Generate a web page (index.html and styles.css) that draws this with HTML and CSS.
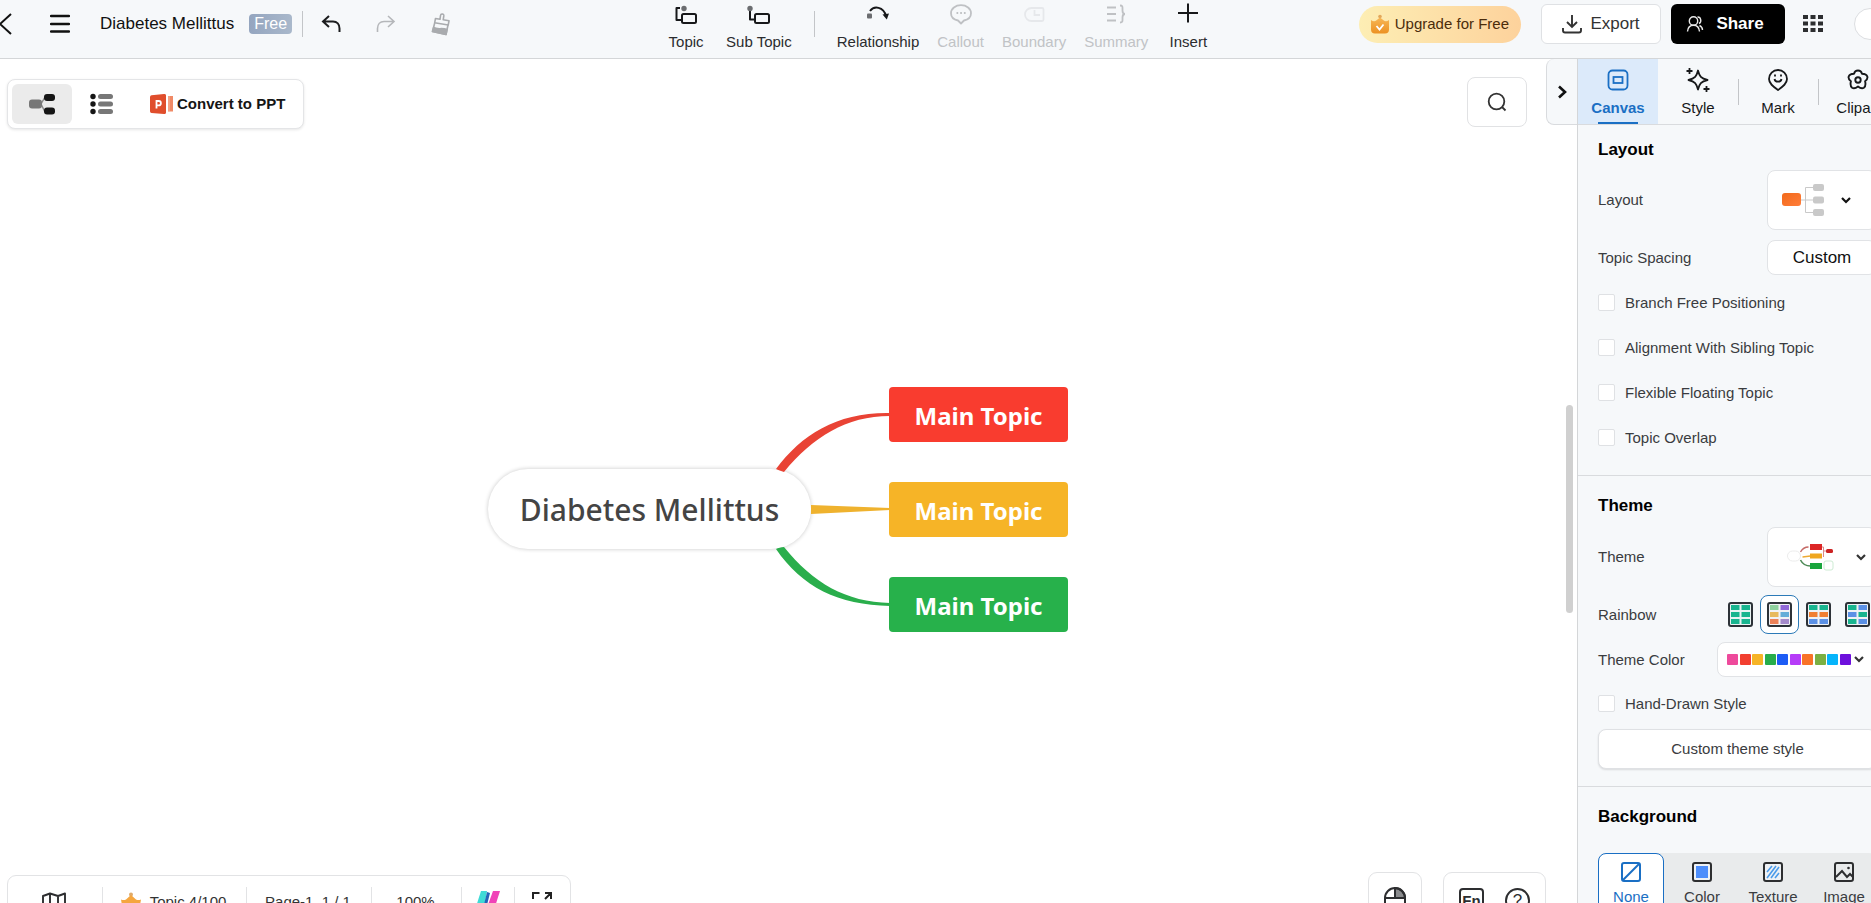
FILE: index.html
```html
<!DOCTYPE html>
<html lang="en">
<head>
    <meta charset="UTF-8">
    <meta name="viewport" content="width=device-width, initial-scale=1.0">
    <title>Diabetes Mellittus</title>
    <link rel="stylesheet" href="styles.css">
</head>
<body>
<div class="app">
    <header class="topbar">
        <div class="file-group">
            <button class="icon-btn back" aria-label="Back">
                <svg width="12" height="22" viewBox="0 0 12 22" fill="none" stroke="#111" stroke-width="2"><path d="M11 1L0 11l11 10"/></svg>
            </button>
            <button class="icon-btn menu" aria-label="Menu">
                <svg width="20" height="20" viewBox="0 0 20 20" stroke="#111" stroke-width="2.4" stroke-linecap="round"><path d="M1 2h18M1 10h18M1 17.500h18"/></svg>
            </button>
            <h1 class="file-name">Diabetes Mellittus</h1>
            <span class="plan-badge">Free</span>
            <span class="divider"></span>
            <button class="icon-btn undo" aria-label="Undo">
                <svg width="20" height="20" viewBox="0 0 20 20" fill="none" stroke="#1b1c1e" stroke-width="2"><path d="M8 2L2 7.500 8 13M2.500 7.500H12c4 0 6.500 3 6.500 7v3.500"/></svg>
            </button>
            <button class="icon-btn redo" aria-label="Redo" disabled>
                <svg width="20" height="20" viewBox="0 0 20 20" fill="none" stroke="#b5b7ba" stroke-width="1.600"><path d="M12 2l6 5.500-6 5.500M17.500 7.500H8c-4 0-6.500 3-6.500 7v3.500"/></svg>
            </button>
            <button class="icon-btn" aria-label="Format painter" disabled>
                <svg width="20" height="24" viewBox="0 0 20 24" fill="none" stroke="#a9abae" stroke-width="1.600" stroke-linejoin="round"><path d="M4.500 6.500l4.500.8.500-3.800c.3-2.300 3.600-1.900 3.300.4l-.6 3.900 5.800 1-.8 4.200-13.500-2.300z"/><path d="M3.700 11L1.500 19.500 15 22.500l2-9.500"/><path d="M2.600 15.500c4 2.500 8 0 13.400 2l-1 5-13.500-3z" fill="#a9abae"/></svg>
            </button>
        </div>

        <nav class="tools" aria-label="Insert tools">
            <button class="tool">
                <svg width="24" height="24" viewBox="0 0 24 24" fill="none" stroke="#17181a" stroke-width="2" stroke-linejoin="round"><path d="M6 6H2.500v12H8"/><rect x="8" y="12" width="14" height="9" rx="1.500"/><circle cx="10" cy="6.500" r="2.700" fill="#6b6d70" stroke="none"/></svg>
                <span>Topic</span>
            </button>
            <button class="tool">
                <svg width="24" height="24" viewBox="0 0 24 24" fill="none" stroke="#17181a" stroke-width="2" stroke-linejoin="round"><path d="M3 9v8.500h5"/><rect x="8" y="12" width="14" height="9" rx="1.500"/><circle cx="3" cy="6.500" r="2.700" fill="#6b6d70" stroke="none"/></svg>
                <span>Sub Topic</span>
            </button>
            <span class="divider"></span>
            <button class="tool">
                <svg width="24" height="24" viewBox="0 0 24 24" fill="none" stroke="#17181a" stroke-width="2"><path d="M4 9c4-5.500 13.500-4.500 16 5"/><path d="M16.500 12.500l6.500-1-2.200 6z" fill="#17181a" stroke="none"/><rect x="1" y="11.500" width="5" height="5" rx="1" fill="#6b6d70" stroke="none"/></svg>
                <span>Relationship</span>
            </button>
            <button class="tool" disabled>
                <svg width="24" height="24" viewBox="0 0 24 24" fill="none" stroke="#bfc1c4" stroke-width="1.800"><path d="M12 21.500l-3-3C4.500 17.500 2 15 2 11.200 2 6.500 6.500 3.200 12 3.200s10 3.300 10 8c0 3.800-2.500 6.300-7 7.300z" stroke-linejoin="round"/><path d="M7.500 11h1.700M11.200 11h1.700M14.900 11h1.700"/></svg>
                <span>Callout</span>
            </button>
            <button class="tool" disabled>
                <svg width="24" height="24" viewBox="0 0 24 24" fill="none" stroke="#e6e8eb" stroke-width="1.800"><path d="M9.500 6H20a1.500 1.500 0 0 1 1.500 1.500v10A1.500 1.500 0 0 1 20 19H9.500a6.500 6.500 0 0 1 0-13z"/><path d="M12.500 8v5H18"/></svg>
                <span>Boundary</span>
            </button>
            <button class="tool" disabled>
                <svg width="24" height="24" viewBox="0 0 24 24" fill="none" stroke="#bfc1c4" stroke-width="1.800"><path d="M3 5.500h9M3 12h9M3 18.500h9M16 3.500c3 0 2.500 1.500 2.500 5 0 2 .5 3.500 2.500 3.500-2 0-2.500 1.500-2.500 3.500 0 3.500.5 5-2.500 5"/></svg>
                <span>Summary</span>
            </button>
            <button class="tool">
                <svg width="24" height="24" viewBox="0 0 24 24" stroke="#17181a" stroke-width="2"><path d="M12 1.500v19M2 11h20"/></svg>
                <span>Insert</span>
            </button>
        </nav>

        <div class="account-group">
            <button class="upgrade">
                <svg width="18" height="20" viewBox="0 0 18 20"><defs><linearGradient id="crown" x1="0" y1="0" x2="0" y2="1"><stop offset="0" stop-color="#f7b757"/><stop offset="1" stop-color="#ec9122"/></linearGradient></defs><circle cx="9" cy="2.500" r="1.800" fill="#e3a85b"/><path d="M0 6c2 1.500 4 1.500 5.500.3L9 3.500l3.500 2.800C14 7.500 16 7.500 18 6v9.500a4 4 0 0 1-4 4H4a4 4 0 0 1-4-4z" fill="url(#crown)"/><path d="M5.500 12l3 3.500 4-5" fill="none" stroke="#fff" stroke-width="1.800"/></svg>
                Upgrade for Free
            </button>
            <button class="export">
                <svg width="20" height="20" viewBox="0 0 20 20" fill="none" stroke="#333" stroke-width="1.900"><path d="M10 1v11.500M5 8l5 5 5-5M1 14v2.500a2 2 0 0 0 2 2h14a2 2 0 0 0 2-2V14"/></svg>
                Export
            </button>
            <button class="share">
                <svg width="18" height="18" viewBox="0 0 18 18" fill="none" stroke="#e8e8e8" stroke-width="1.400"><circle cx="7.500" cy="6" r="4.200"/><path d="M1.500 16.500c.3-4 2.700-6.300 6-6.300s5.700 2.300 6 6.300M11.500 2c3.500-.3 4.500 5 1.500 6.500M13.500 10.500c2 1 3 2.500 3 4.500"/></svg>
                Share
            </button>
            <button class="icon-btn apps" aria-label="Apps">
                <svg width="20" height="18" viewBox="0 0 20 18" fill="#2d2e30"><path d="M0 0h5v4H0zM7.500 0h5v4h-5zM15 0h5v4h-5zM0 6.500h5v4H0zM7.500 6.500h5v4h-5zM15 6.500h5v4h-5zM0 13h5v4H0zM7.500 13h5v4h-5zM15 13h5v4h-5z"/></svg>
            </button>
            <button class="avatar" aria-label="Account"></button>
        </div>
    </header>

    <div class="workspace">
        <main class="canvas">
            <div class="view-switch">
                <button class="view active" aria-label="Mind map view">
                    <svg width="26" height="22" viewBox="0 0 26 22"><path d="M12 11l4-7M12 11l4 8" stroke="#8a8a8a" stroke-width="1.500"/><rect x="0" y="6.500" width="13" height="9" rx="3" fill="#777"/><rect x="15" y="1" width="11" height="7" rx="3" fill="#151515"/><rect x="15" y="14.500" width="11" height="7" rx="3" fill="#151515"/></svg>
                </button>
                <button class="view" aria-label="Outline view">
                    <svg width="24" height="22" viewBox="0 0 24 22"><g fill="#151515"><circle cx="3" cy="3.500" r="2.700"/><circle cx="3" cy="11" r="2.700"/><circle cx="3" cy="18.500" r="2.700"/></g><g fill="#777"><rect x="8" y="1" width="15" height="5" rx="2.500"/><rect x="8" y="8.500" width="15" height="5" rx="2.500"/><rect x="8" y="16" width="15" height="5" rx="2.500"/></g></svg>
                </button>
                <button class="convert">
                    <svg width="24" height="22" viewBox="0 0 24 22"><path d="M0 4a2 2 0 0 1 1.500-1.700L14 1a1.500 1.500 0 0 1 2 1.500v17a1.500 1.500 0 0 1-2 1.500L1.500 20A2 2 0 0 1 0 18z" fill="#e04e2c"/><path d="M18 3h5v15.500h-5z" fill="#f08a66"/><path d="M19 3v15.500" stroke="#f6b9a2"/><path d="M6.500 15.500V8h2.200a2.200 2.200 0 0 1 0 4.400H6.500" fill="none" stroke="#fff" stroke-width="1.800"/></svg>
                    Convert to PPT
                </button>
            </div>
            <button class="search" aria-label="Search">
                <svg width="20" height="20" viewBox="0 0 20 20" fill="none" stroke="#333" stroke-width="1.800"><circle cx="9.500" cy="9.500" r="7.800"/><path d="M15 15l3.500 3.500"/></svg>
            </button>

            <!-- mind map -->
            <div class="mindmap">
                <div class="node root">Diabetes Mellittus</div>
                <div class="node main red">Main Topic</div>
                <div class="node main yellow">Main Topic</div>
                <div class="node main green">Main Topic</div>
                <svg class="links" width="580" height="245" viewBox="0 0 580 245">
                    <path d="M288 82C314 47 350 25 402 26V29C358 29 325 50 296 85C293 84 290 83 288 82z" fill="#e94335"/>
                    <path d="M323 118l79 3v2l-79 4z" fill="#efb22e"/>
                    <path d="M288 162C314 200 350 218 402 219V216C358 215 325 196 296 160C293 160 290 161 288 162z" fill="#2aae4c"/>
                </svg>
            </div>

            <div class="scrollbar"></div>

            <div class="status-bar">
                <button aria-label="Overview">
                    <svg width="24" height="20" viewBox="0 0 24 20" fill="none" stroke="#2d2e30" stroke-width="1.900" stroke-linejoin="round"><path d="M1 4l7-2.500 8 2.500 7-2.500v15L16 19l-8-2.500L1 19zM8 1.500v15M16 4v15"/></svg>
                </button>
                <button>
                    <svg width="20" height="20" viewBox="0 0 20 20" fill="#f5a63f"><circle cx="10" cy="2.500" r="2" fill="#e0ab6b"/><path d="M0 7.500c2 .8 3.500.7 5 0L10 3l5 4.500c1.500.7 3 .8 5 0L18 19H2z"/></svg>
                    Topic 4/100
                </button>
                <button>Page-1&nbsp; 1 / 1</button>
                <button>100%</button>
                <button aria-label="Assistant">
                    <svg width="26" height="22" viewBox="0 0 26 22"><path d="M7 0h6L9 22H0z" fill="#3fdad6"/><path d="M13 1l3 1-5 20H8z" fill="#2563b8"/><path d="M19 0h7l-7 22h-8z" fill="#f043b8"/></svg>
                </button>
                <button aria-label="Full screen">
                    <svg width="20" height="20" viewBox="0 0 20 20" fill="none" stroke="#222" stroke-width="2"><path d="M7.500 1H1v6M13 1h6v6M18.500 1.500L13 7M19 13v6h-6.500M1 13v6h6.500"/></svg>
                </button>
            </div>

            <div class="help-tools">
                <div class="tool-box">
                    <button aria-label="Mouse mode">
                        <svg width="22" height="28" viewBox="0 0 22 28" fill="none" stroke="#2d2e30" stroke-width="2"><path d="M11 1a10 10 0 0 1 10 10H11z" fill="#8a8b8d"/><rect x="1" y="1" width="20" height="26" rx="10"/><path d="M1 11h20M11 1v10"/></svg>
                    </button>
                </div>
                <div class="tool-box">
                    <button class="fn-key">Fn</button>
                    <button class="help">?</button>
                </div>
            </div>
        </main>

        <button class="collapse" aria-label="Collapse panel">
            <svg width="9" height="14" viewBox="0 0 9 14" fill="none" stroke="#111" stroke-width="2.600"><path d="M1 1.500L7 7l-6 5.500"/></svg>
        </button>

        <aside class="panel">
            <nav class="tabs">
                <button class="tab active">
                    <svg width="22" height="22" viewBox="0 0 22 22" fill="none" stroke="#1a6fc4" stroke-width="1.800"><rect x="1.500" y="1.500" width="19" height="19" rx="4"/><rect x="6.500" y="8" width="9" height="6"/></svg>
                    <span>Canvas</span>
                </button>
                <button class="tab">
                    <svg width="24" height="24" viewBox="0 0 24 24" fill="none" stroke="#17181a" stroke-width="1.800" stroke-linejoin="round"><path d="M12 2.500c1.500 6 3 8 9.500 9.500-6.500 1.500-8 3.500-9.500 9.500-1.500-6-3-8-9.500-9.500 6.500-1.500 8-3.500 9.500-9.500z"/><path d="M3.500 0v6M.5 3h6M20.500 18v6M17.500 21h6"/></svg>
                    <span>Style</span>
                </button>
                <button class="tab">
                    <svg width="22" height="22" viewBox="0 0 22 22" fill="none" stroke="#17181a" stroke-width="1.800" stroke-linejoin="round"><path d="M11 21c-5-3.500-9-6.500-9-11a9 9 0 0 1 18 0c0 4.500-4 7.500-9 11z"/><path d="M7.500 10c.5 3.500 6.500 3.500 7 0M8 5.500v2M14 5.500v2"/></svg>
                    <span>Mark</span>
                </button>
                <button class="tab">
                    <svg width="22" height="22" viewBox="0 0 22 22" fill="none" stroke="#17181a" stroke-width="1.900" stroke-linejoin="round"><path d="M11 1.500c2 0 3.500 1.200 4 3.200 2.500.1 4.700 1 5.300 2.800.6 2-.5 3.500-2.200 4.700.6 2.600.4 5.300-1.200 6.500-1.700 1.200-4 .3-5.900-1.200-1.900 1.500-4.200 2.400-5.900 1.200-1.600-1.200-1.800-3.900-1.200-6.500C2.200 11 1.100 9.500 1.700 7.500 2.300 5.700 4.500 4.800 7 4.700c.5-2 2-3.200 4-3.200z"/><circle cx="11" cy="11" r="2.700"/></svg>
                    <span>Clipart</span>
                </button>
            </nav>

            <section class="section">
                <h2>Layout</h2>
                <div class="row">
                    <span>Layout</span>
                    <button class="picker layout-picker" aria-label="Choose layout">
                        <svg width="42" height="34" viewBox="0 0 42 34"><defs><linearGradient id="orange" x1="0" y1="0" x2="1" y2="1"><stop offset="0" stop-color="#f26a1b"/><stop offset="1" stop-color="#ff7d3a"/></linearGradient></defs><path d="M18 17h14M32 4.500h-8.500v25H32" fill="none" stroke="#c9c9c9"/><rect x="0" y="10" width="19" height="13" rx="3" fill="url(#orange)"/><g fill="#c9c9c9"><rect x="31" y="1" width="11" height="7" rx="2"/><rect x="31" y="13.500" width="11" height="7" rx="2"/><rect x="31" y="26" width="11" height="7" rx="2"/></g></svg>
                        <svg width="10" height="7" viewBox="0 0 10 7" fill="none" stroke="#111" stroke-width="2.200"><path d="M1 1l4 4 4-4"/></svg>
                    </button>
                </div>
                <div class="row">
                    <span>Topic Spacing</span>
                    <button class="custom">Custom</button>
                </div>
                <div class="checks">
                    <label class="check"><input type="checkbox">Branch Free Positioning</label>
                    <label class="check"><input type="checkbox">Alignment With Sibling Topic</label>
                    <label class="check"><input type="checkbox">Flexible Floating Topic</label>
                    <label class="check"><input type="checkbox">Topic Overlap</label>
                </div>
            </section>

            <section class="section theme">
                <h2>Theme</h2>
                <div class="row">
                    <span>Theme</span>
                    <button class="picker theme-picker" aria-label="Choose theme">
                        <svg width="48" height="28" viewBox="0 0 48 28" fill="none"><rect x=".5" y="8" width="13" height="10" rx="5" stroke="#ececec"/><path d="M13.500 9c2-3.500 4-5 8-5" stroke="#c56a66" stroke-width="1.400"/><path d="M15.500 14l8-1" stroke="#edaa33" stroke-width="1.300"/><path d="M13.500 17c2 4 5 6 10 6" stroke="#4d8a56" stroke-width="1.600"/><path d="M35 4h1.500v10M36.500 8H40" stroke="#d88"/><rect x="23" y="1" width="12" height="6" fill="#dc2626"/><rect x="23" y="10.500" width="12" height="5" fill="#efa71f"/><rect x="23" y="20" width="12" height="6" fill="#18a53c"/><rect x="39" y="6" width="7" height="4" rx="1.500" fill="#c22"/><rect x="37" y="18" width="9" height="9" rx="2" stroke="#cdebd3"/></svg>
                        <svg width="10" height="7" viewBox="0 0 10 7" fill="none" stroke="#333" stroke-width="2.200"><path d="M1 1l4 4 4-4"/></svg>
                    </button>
                </div>
                <div class="row">
                    <span>Rainbow</span>
                    <div class="rainbow">
                        <button aria-label="Single color"><svg width="25" height="25" viewBox="0 0 25 25"><rect x="1" y="1" width="23" height="23" rx="2" fill="#e9f3f3" stroke="#2d3238" stroke-width="2"/><path d="M3 3h8.500v5H3zM13.500 3H22v5h-8.500zM3 10h8.500v5H3zM13.500 10H22v5h-8.500zM3 17h8.500v5H3zM13.500 17H22v5h-8.500z" fill="#18b58f"/></svg></button>
                        <button class="selected" aria-label="Rainbow colors"><svg width="25" height="25" viewBox="0 0 25 25"><rect x="1" y="1" width="23" height="23" rx="2" fill="#f1f1f4" stroke="#2d3238" stroke-width="2"/><path d="M3 3h8.500v5H3z" fill="#8fd19e"/><path d="M13.500 3H22v5h-8.500z" fill="#9068d8"/><path d="M3 10h8.500v5H3z" fill="#e8b95c"/><path d="M13.500 10H22v5h-8.500z" fill="#64add8"/><path d="M3 17h8.500v5H3z" fill="#ec8158"/><path d="M13.500 17H22v5h-8.500z" fill="#a58bcb"/></svg></button>
                        <button aria-label="Row colors"><svg width="25" height="25" viewBox="0 0 25 25"><rect x="1" y="1" width="23" height="23" rx="2" fill="#eef2f5" stroke="#2d3238" stroke-width="2"/><path d="M3 3h8.500v5H3zM13.500 3H22v5h-8.500z" fill="#18b58f"/><path d="M3 10h8.500v5H3zM13.500 10H22v5h-8.500z" fill="#f07f32"/><path d="M3 17h8.500v5H3zM13.500 17H22v5h-8.500z" fill="#5b91e6"/></svg></button>
                        <button aria-label="Mixed colors"><svg width="25" height="25" viewBox="0 0 25 25"><rect x="1" y="1" width="23" height="23" rx="2" fill="#eef2f5" stroke="#2d3238" stroke-width="2"/><path d="M3 3h8.500v5H3zM13.500 10H22v5h-8.500zM3 17h8.500v5H3z" fill="#18b58f"/><path d="M13.500 3H22v5h-8.500zM3 10h8.500v5H3zM13.500 17H22v5h-8.500z" fill="#5b91e6"/></svg></button>
                    </div>
                </div>
                <div class="row">
                    <span>Theme Color</span>
                    <button class="picker color-picker" aria-label="Choose theme color">
                        <span class="swatches">
                            <i class="pink"></i><i class="red"></i><i class="yellow"></i><i class="green"></i><i class="blue"></i><i class="purple"></i><i class="orange"></i><i class="olive"></i><i class="cyan"></i><i class="violet"></i>
                        </span>
                        <svg width="10" height="7" viewBox="0 0 10 7" fill="none" stroke="#333" stroke-width="2.200"><path d="M1 1l4 4 4-4"/></svg>
                    </button>
                </div>
                <div class="checks">
                    <label class="check"><input type="checkbox">Hand-Drawn Style</label>
                </div>
                <button class="custom-theme">Custom theme style</button>
            </section>

            <section class="section background">
                <h2>Background</h2>
                <div class="fills">
                    <button class="fill active">
                        <svg width="20" height="20" viewBox="0 0 20 20" fill="none" stroke="#1a6fc4" stroke-width="2"><rect x="1" y="1" width="18" height="18" rx="2"/><path d="M2 18L18 2"/></svg>
                        None
                    </button>
                    <button class="fill">
                        <svg width="20" height="20" viewBox="0 0 20 20"><rect x="1" y="1" width="18" height="18" rx="2" fill="#eef1f5" stroke="#2d2e30" stroke-width="2"/><path d="M4 4h12v12H4z" fill="#4c8dfb"/></svg>
                        Color
                    </button>
                    <button class="fill">
                        <svg width="20" height="20" viewBox="0 0 20 20" fill="none"><rect x="1" y="1" width="18" height="18" rx="2" fill="#eef1f5" stroke="#2d2e30" stroke-width="2"/><path d="M4 10l5-6M4 16L13 4M8 16l8-11M12 16l4-5" stroke="#4b9bea" stroke-width="1.600"/></svg>
                        Texture
                    </button>
                    <button class="fill">
                        <svg width="20" height="20" viewBox="0 0 20 20" fill="none" stroke="#2d2e30" stroke-width="2"><rect x="1" y="1" width="18" height="18" rx="2"/><path d="M2 15l6-6 5 6 3-3 3 3"/><circle cx="14.500" cy="6" r="1.300" fill="#2d2e30" stroke="none"/></svg>
                        Image
                    </button>
                </div>
            </section>
        </aside>
    </div>
</div>
</body>
</html>
```
FILE: styles.css
```css
* {
    box-sizing: border-box;
}
body {
    margin: 0;
    height: 100vh;
    overflow: hidden;
    background: #fff;
    color: #3a3c40;
    font-family: "Liberation Sans", Arial, sans-serif;
    font-size: 15px;
    line-height: 18px;
}
button {
    display: flex;
    align-items: center;
    justify-content: center;
    margin: 0;
    padding: 0;
    border: none;
    background: none;
    color: inherit;
    font: inherit;
    cursor: pointer;
}
svg {
    display: block;
    flex: none;
}
h1, h2 {
    margin: 0;
}

/* the app runs a little past the right and bottom edges of the window */
.app {
    display: flex;
    flex-direction: column;
    width: calc(100vw + 26px);
    height: calc(100vh + 26px);
}

/* top bar */
.topbar {
    display: grid;
    grid-template-columns: 35% auto 1fr;
    flex: none;
    height: 59px;
    padding-right: 11px;
    background: #f6f8fa;
    border-bottom: 1px solid #d4d6d8;
}
.file-group {
    display: flex;
    align-items: center;
    height: 48px;
}
.back {
    margin-right: 38px;
}
.menu {
    margin-right: 30px;
}
.file-name {
    color: #111;
    font-size: 17px;
    font-weight: 400;
    line-height: 20px;
    white-space: nowrap;
}
.plan-badge {
    margin: 0 10px 0 15px;
    padding: 1px 5px;
    border-radius: 4px;
    background: linear-gradient(90deg, #94a5bf, #a9b8cb);
    color: #fff;
    font-size: 16px;
}
.divider {
    flex: none;
    width: 1px;
    height: 26px;
    background: #c3c5c8;
}
.undo {
    margin: 0 35px 0 18px;
}
.redo {
    margin-right: 35px;
}
.tools {
    display: flex;
    align-items: flex-start;
    gap: 2px;
    margin-left: -4px;
    padding-top: 2px;
}
.tools .divider {
    margin: 9px 12px 0;
}
.tool {
    flex-direction: column;
    gap: 7px;
    min-width: 60px;
    padding: 0 8px;
    color: #2b2c2e;
    white-space: nowrap;
}
.tool:disabled {
    color: #c1c3c6;
}
.account-group {
    display: flex;
    align-items: center;
    justify-content: flex-end;
    height: 48px;
}
.upgrade {
    gap: 6px;
    height: 37px;
    margin-right: 20px;
    padding: 0 12px;
    border-radius: 19px;
    background: linear-gradient(90deg, #fdeeb4, #fdd29c);
    color: #4b2c0b;
    white-space: nowrap;
}
.export,
.share {
    gap: 8px;
    height: 40px;
    border-radius: 6px;
    font-size: 17px;
}
.export {
    width: 120px;
    margin-right: 10px;
    border: 1px solid #dfe1e4;
    background: #fff;
    color: #333;
}
.share {
    gap: 12px;
    width: 114px;
    margin-right: 18px;
    padding-right: 6px;
    background: #000;
    color: #fff;
    font-weight: 700;
}
.apps {
    margin-right: 31px;
}
.avatar {
    width: 32px;
    height: 32px;
    border: 1px solid #dcdee1;
    border-radius: 50%;
    background: #fff;
}

/* canvas */
.workspace {
    display: flex;
    flex: 1;
    align-items: flex-start;
    min-height: 0;
}
.canvas {
    position: relative;
    flex: 1;
    align-self: stretch;
    margin-right: -31px;
    background: #fff;
}
.view-switch {
    position: absolute;
    top: 20px;
    left: 7px;
    display: flex;
    align-items: center;
    height: 50px;
    padding: 4px;
    border: 1px solid #e4e5e7;
    border-radius: 8px;
    background: #fff;
    box-shadow: 0 1px 3px rgba(0, 0, 0, 0.1);
}
.view {
    width: 60px;
    height: 40px;
    border-radius: 6px;
}
.view.active {
    background: #ebebeb;
}
.convert {
    gap: 3px;
    padding: 0 14px 0 18px;
    color: #151515;
    font-weight: 700;
}
.search {
    position: absolute;
    top: 18px;
    right: 50px;
    width: 60px;
    height: 50px;
    border: 1px solid #e1e2e4;
    border-radius: 8px;
    background: #fff;
}
.scrollbar {
    position: absolute;
    top: 346px;
    right: 4px;
    width: 7px;
    height: 208px;
    border-radius: 4px;
    background: #d0d0d0;
}
.mindmap {
    position: absolute;
    top: 328px;
    left: 488px;
    width: 580px;
    height: 245px;
    font-family: "Noto Sans", "Open Sans", sans-serif;
}
.links {
    position: absolute;
    top: 0;
    left: 0;
}
.node {
    position: absolute;
    display: flex;
    align-items: center;
    justify-content: center;
    padding-top: 2px;
    white-space: nowrap;
}
.root {
    top: 82px;
    left: 0;
    width: 323px;
    height: 80px;
    border-radius: 40px;
    background: #fff;
    box-shadow: 0 0 4px rgba(0, 0, 0, 0.22);
    color: #444;
    font-size: 30px;
    font-weight: 500;
}
.main {
    left: 401px;
    width: 179px;
    height: 55px;
    border-radius: 4px;
    color: #fff;
    font-size: 24px;
    font-weight: 700;
}
.main.red {
    top: 0;
    background: #f93c2f;
}
.main.yellow {
    top: 95px;
    background: #f6b427;
}
.main.green {
    top: 190px;
    background: #27b14b;
}

/* bottom bars */
.status-bar {
    position: absolute;
    bottom: 0;
    left: 7px;
    display: grid;
    grid-template-columns: 94px 144px 125px 90px 53px 56px;
    align-items: center;
    height: 54px;
    border: 1px solid #e2e3e5;
    border-radius: 9px;
    background: #fff;
}
.status-bar button {
    gap: 9px;
    height: 30px;
    padding-right: 2px;
    color: #333;
    white-space: nowrap;
}
.status-bar button + button {
    border-left: 1px solid #e2e3e5;
}
.help-tools {
    position: absolute;
    right: 31px;
    bottom: 0;
    display: flex;
    gap: 21px;
}
.tool-box {
    display: flex;
    align-items: center;
    gap: 21px;
    height: 57px;
    padding: 0 15px;
    border: 1px solid #e2e3e5;
    border-radius: 9px;
    background: #fff;
}
.fn-key,
.help {
    width: 25px;
    height: 25px;
    border: 2px solid #2d2e30;
    border-radius: 4px;
    color: #2d2e30;
    font-weight: 700;
}
.help {
    border-radius: 50%;
    font-size: 17px;
    font-weight: 400;
}

/* right panel */
.collapse {
    position: relative;
    flex: none;
    width: 31px;
    height: 66px;
    border: 1px solid #d9dbde;
    border-top: none;
    border-right: none;
    border-radius: 8px 0 0 8px;
    background: #f6f8fa;
}
.panel {
    position: relative;
    flex: none;
    align-self: stretch;
    width: 320px;
    border-left: 1px solid #d4d6d8;
    background: #f6f8fa;
    overflow: hidden;
}
.tabs {
    display: grid;
    grid-template-columns: repeat(4, 80px);
    height: 66px;
    border-bottom: 1px solid #d9dbde;
}
.tab {
    position: relative;
    display: grid;
    grid-template-rows: 24px 18px;
    gap: 7px;
    align-content: center;
    justify-items: center;
    align-items: center;
    padding-top: 1px;
    color: #17181a;
}
.tab.active {
    background: #dceafa;
    color: #1a6fc4;
    font-weight: 700;
}
.tab.active::after {
    content: "";
    position: absolute;
    bottom: 0;
    left: 20px;
    width: 40px;
    height: 2px;
    background: #1a6fc4;
}
.tab + .tab + .tab::before {
    content: "";
    position: absolute;
    top: 20px;
    left: 0;
    width: 1px;
    height: 26px;
    background: #c3c5c8;
}
.section {
    display: flex;
    flex-direction: column;
    gap: 10px;
    padding: 15px 20px;
}
.section + .section {
    padding-top: 20px;
    border-top: 1px solid #d9dbde;
}
.section h2 {
    color: #000;
    font-size: 17px;
    line-height: 20px;
}
.row {
    display: flex;
    align-items: center;
    justify-content: space-between;
}
.picker,
.custom {
    border: 1px solid #e1e3e6;
    border-radius: 8px;
    background: #fff;
}
.layout-picker,
.theme-picker {
    justify-content: flex-start;
    gap: 17px;
    width: 110px;
    height: 60px;
    padding-left: 14px;
}
.theme-picker {
    gap: 21px;
    padding-left: 19px;
}
.custom {
    width: 110px;
    height: 35px;
    color: #111;
    font-size: 17px;
}
.checks {
    margin-top: -5px;
}
.check {
    display: flex;
    align-items: center;
    gap: 10px;
    height: 45px;
}
.check input {
    appearance: none;
    width: 17px;
    height: 17px;
    margin: 0;
    border: 1px solid #dfe1e4;
    border-radius: 2px;
    background: #fff;
}
.theme {
    gap: 8px;
    padding-bottom: 17px;
}
.theme h2 {
    margin-bottom: 3px;
}
.theme .checks {
    margin: -4px 0 -5px;
}
.rainbow {
    display: flex;
}
.rainbow button {
    width: 39px;
    height: 39px;
    border: 1px solid transparent;
    border-radius: 8px;
}
.rainbow .selected {
    border-color: #2c7ab8;
    background: #fff;
}
.color-picker {
    justify-content: flex-start;
    gap: 3px;
    width: 160px;
    height: 35px;
    padding-left: 9px;
}
.swatches {
    display: flex;
    justify-content: space-between;
    width: 124px;
}
.swatches i {
    width: 11px;
    height: 11px;
    border-radius: 1px;
}
.swatches .pink { background: #ee4a9c; }
.swatches .red { background: #f23f30; }
.swatches .yellow { background: #f6b427; }
.swatches .green { background: #27ad4b; }
.swatches .blue { background: #1d5cf5; }
.swatches .purple { background: #b63cf8; }
.swatches .orange { background: #f97328; }
.swatches .olive { background: #7bb043; }
.swatches .cyan { background: #06b5fb; }
.swatches .violet { background: #6d10dc; }
.custom-theme {
    height: 40px;
    border: 1px solid #dfe1e4;
    border-radius: 8px;
    background: #fff;
    box-shadow: 0 1px 2px rgba(0, 0, 0, 0.12);
}
.background {
    gap: 26px;
}
.fills {
    display: flex;
    justify-content: space-between;
    border-radius: 8px;
    background: #e9ebec;
}
.fill {
    flex-direction: column;
    gap: 6px;
    width: 66px;
    height: 62px;
    border: 1px solid transparent;
    border-radius: 8px;
}
.fill.active {
    border-color: #1a6fc4;
    background: #fff;
    color: #1a6fc4;
}
```
